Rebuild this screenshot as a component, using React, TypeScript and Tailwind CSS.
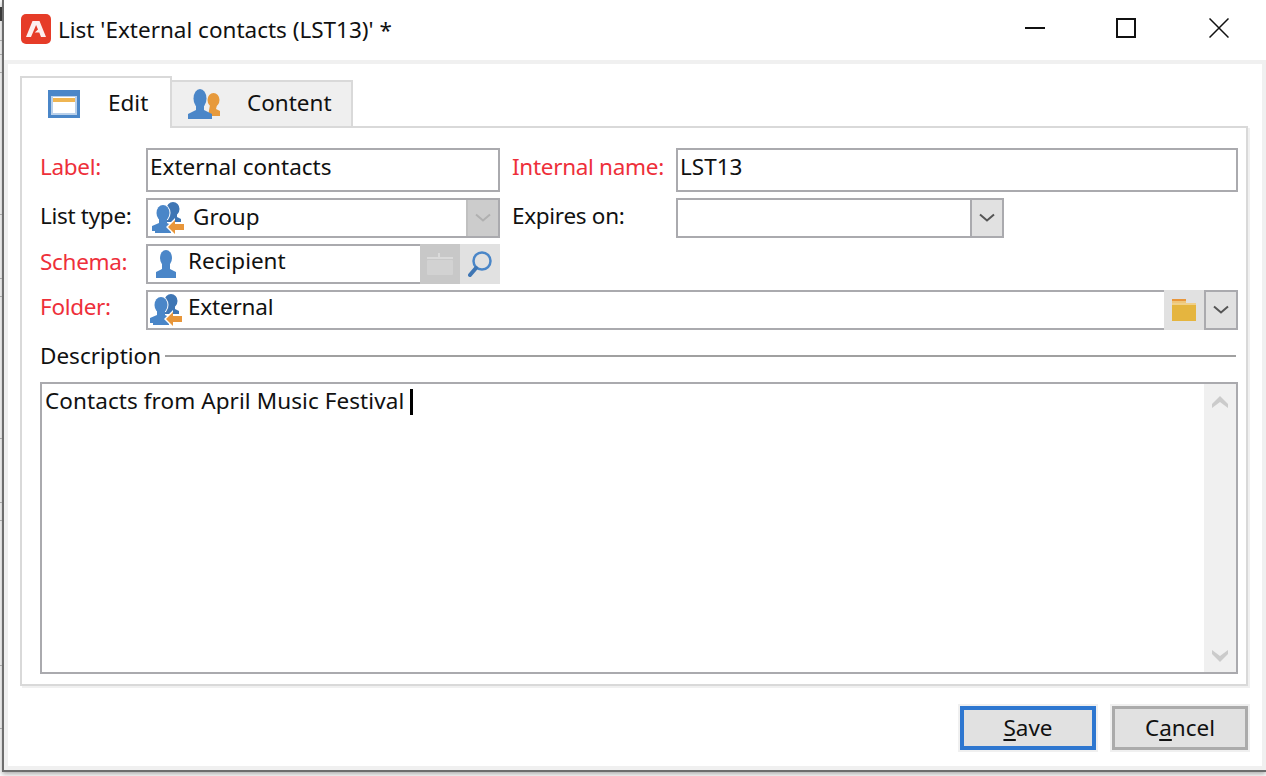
import type { ReactNode } from "react";

// bits of the window behind the dialog that show along the left edge
const backgroundTicks = [40, 54, 72, 214, 278, 296, 438, 502, 520, 665, 728];

const AdobeLogo = () => (
  <svg width="30" height="30" viewBox="0 0 30 30">
    <rect width="30" height="30" rx="5" fill="#e63c28" />
    <path d="M11.5 7h7L25 23h-5l-1.700-4.400h-4.600L17 15.500l-1.900-4.400L10 23H5z" fill="#fff" opacity="0.92" />
  </svg>
);

const EditIcon = () => (
  <svg width="32" height="28" viewBox="0 0 32 28">
    <rect width="32" height="28" fill="#4a86c8" />
    <rect x="3" y="6" width="26" height="19" fill="#b9d0ea" />
    <rect x="5" y="7" width="22" height="16" fill="#fff" />
    <rect x="5" y="8" width="22" height="4" fill="#efb552" />
  </svg>
);

const ContentIcon = () => (
  <svg width="32" height="30" viewBox="0 0 32 30">
    <ellipse cx="25.500" cy="11" rx="6" ry="7" fill="#e79a3c" />
    <path d="M22 16h7l-1 4 4 2v5h-12z" fill="#e79a3c" />
    <ellipse cx="12" cy="9.500" rx="6.500" ry="9.500" fill="#4a86c8" />
    <path d="M8 16h8v5l8 4v5H0v-5l8-4z" fill="#4a86c8" />
  </svg>
);

const GroupIcon = () => (
  <svg width="32" height="32" viewBox="0 0 32 32">
    <ellipse cx="21" cy="7" rx="6.500" ry="7" fill="#3f76b4" />
    <path d="M17 12h8v3l4 2v3H14v-4z" fill="#3f76b4" />
    <ellipse cx="11" cy="11" rx="7.500" ry="9" fill="#fff" />
    <ellipse cx="11" cy="11" rx="6.500" ry="8" fill="#4a86c8" />
    <path d="M7 17h8v4l4 2v8H3v-2H0v-5l7-3z" fill="#4a86c8" />
    <path d="M14 25l9-9v4h9v10h-9v4z" fill="#fff" />
    <path d="M16 25l7-7v4h9v6h-9v4z" fill="#e8963a" />
  </svg>
);

const PersonIcon = () => (
  <svg width="20" height="28" viewBox="0 0 20 28">
    <ellipse cx="10" cy="8" rx="6" ry="8" fill="#4a86c8" />
    <path d="M6 14h8v5l6 3v6H0v-6l6-3z" fill="#4a86c8" />
  </svg>
);

const SearchIcon = () => (
  <svg width="24" height="26" viewBox="0 0 24 26" fill="none">
    <circle cx="14" cy="10" r="8.500" stroke="#4a86c8" strokeWidth="2.500" />
    <path d="M8 17L2 24" stroke="#3f76b4" strokeWidth="4" strokeLinecap="round" />
  </svg>
);

const FolderIcon = () => (
  <svg width="24" height="22" viewBox="0 0 24 22">
    <rect y="0" width="14" height="2" fill="#e8963a" />
    <rect y="2" width="14" height="2" fill="#efc67a" />
    <rect y="4" width="24" height="18" fill="#e5b53f" />
    <rect y="4" width="24" height="2" fill="#f0d08a" />
  </svg>
);

const Chevron = ({ color = "#555555" }: { color?: string }) => (
  <svg width="16" height="10" viewBox="0 0 16 10" fill="none">
    <path d="M1 1.500l7 6 7-6" stroke={color} strokeWidth="2" />
  </svg>
);

const ScrollArrow = ({ down }: { down?: boolean }) => (
  <svg width="16" height="12" viewBox="0 0 16 12" className={down ? "rotate-180" : ""}>
    <path d="M0 8L8 0l8 8v4L8 6l-8 6z" fill="#cbcbcb" />
  </svg>
);

const Label = ({ children, red }: { children: ReactNode; red?: boolean }) => (
  <div className={`w-[106px] shrink-0 tracking-[-0.3px] ${red ? "text-[#ee2f3a]" : "text-[#111111]"}`}>{children}</div>
);

export default function App() {
  return (
    <div className="relative w-[1266px] h-[776px] overflow-hidden bg-white pl-[2px] text-[#111111] text-[22.5px] leading-[30px] font-['Noto_Sans','Open_Sans',sans-serif]">
      <div className="absolute left-0 top-[7px] w-[2px] h-[14px] bg-[#3a3a3a]" />
      {backgroundTicks.map((y) => (
        <div key={y} className="absolute left-0 w-[2px] h-[1px] bg-[#a8a8a8]" style={{ top: y }} />
      ))}

      <div className="h-[772px] flex flex-col bg-white border-l-2 border-b-2 border-[#6d6d6d] shadow-[0_2px_5px_rgba(0,0,0,0.35)]">
        {/* Title bar */}
        <div className="h-[60px] shrink-0 flex items-center pl-[17px]">
          <div className="mt-[-2px]">
            <AdobeLogo />
          </div>
          <div className="ml-[7px] mt-[-1px]">List 'External contacts (LST13)' *</div>
          <div className="ml-auto flex items-center mr-[37px] mt-[-4px]">
            <div className="w-5 h-[2px] bg-[#111111]" />
            <div className="ml-[71px] w-5 h-5 border-2 border-[#111111]" />
            <svg className="ml-[73px]" width="20" height="20" viewBox="0 0 20 20" fill="none">
              <path d="M0.500 0.500l19 19M19.500 0.500l-19 19" stroke="#111111" strokeWidth="1.500" />
            </svg>
          </div>
        </div>

        {/* Client area */}
        <div className="flex-1 flex flex-col border-4 border-[#f0f0f0] px-3 pt-3">
          {/* Tabs */}
          <div className="flex items-end h-[52px] mb-[-2px]">
            <div className="relative z-10 w-[152px] h-[52px] flex items-center bg-white border-2 border-b-0 border-[#d9d9d9] pl-[26px]">
              <div className="pt-[2px]">
                <EditIcon />
              </div>
              <span className="ml-[28px]">Edit</span>
            </div>
            <div className="w-[181px] h-[48px] flex items-center bg-[#efefef] border-2 border-l-0 border-[#d9d9d9] pl-[16px]">
              <ContentIcon />
              <span className="ml-[27px] mt-[-2px]">Content</span>
            </div>
          </div>

          {/* Panel */}
          <div className="h-[560px] w-[1228px] flex flex-col border-2 border-[#d9d9d9] shadow-[2px_2px_0_#f0f0f0] pl-[18px] pr-[7px] pt-5 pb-[10px]">
            <div className="flex h-[44px]">
              <Label red>
                <div className="mt-[4px]">Label:</div>
              </Label>
              <div className="w-[354px] border-2 border-[#aaaaae] pl-[2px] pt-[2px]">External contacts</div>
              <div className="ml-3 w-[164px] mt-[4px] text-[#ee2f3a] tracking-[-0.3px]">Internal name:</div>
              <div className="w-[562px] border-2 border-[#aaaaae] pl-[2px] pt-[2px]">LST13</div>
            </div>

            <div className="flex h-10 mt-[6px]">
              <Label>
                <div className="mt-[3px]">List type:</div>
              </Label>
              <div className="w-[354px] flex border-2 border-[#aaaaae]">
                <div className="flex-1 flex items-center pl-1">
                  <GroupIcon />
                  <span className="ml-[9px] mt-[-2px]">Group</span>
                </div>
                <div className="w-8 flex items-center justify-center bg-[#cccccc] border-l-2 border-[#c0c0c0]">
                  <Chevron color="#b0b0b0" />
                </div>
              </div>
              <div className="ml-3 w-[164px] mt-[3px] tracking-[-0.3px]">Expires on:</div>
              <div className="w-[328px] flex justify-end border-2 border-[#aaaaae]">
                <div className="w-8 flex items-center justify-center bg-[#e1e1e1] border-l-2 border-[#aaaaae]">
                  <Chevron />
                </div>
              </div>
            </div>

            <div className="flex h-10 mt-[6px]">
              <Label red>
                <div className="mt-[3px]">Schema:</div>
              </Label>
              <div className="w-[274px] flex items-center border-2 border-r-0 border-[#aaaaae] pl-2">
                <PersonIcon />
                <span className="ml-3 mt-[-6px]">Recipient</span>
              </div>
              <div className="w-10 flex items-center justify-center bg-[#c8c8c8]">
                <svg width="26" height="22" viewBox="0 0 26 22">
                  <path d="M0 4h11V0h2v4h13v2H0z" fill="#dadada" />
                  <rect y="7" width="26" height="15" rx="1" fill="#d2d2d2" />
                </svg>
              </div>
              <div className="w-10 flex items-center justify-center bg-[#e1e1e1]">
                <SearchIcon />
              </div>
            </div>

            <div className="flex h-10 mt-[6px]">
              <Label red>
                <div className="mt-[2px]">Folder:</div>
              </Label>
              <div className="w-[1018px] flex items-center border-2 border-r-0 border-[#aaaaae] pl-[2px]">
                <GroupIcon />
                <span className="ml-[6px] mt-[-6px] tracking-[-0.2px]">External</span>
              </div>
              <div className="w-10 flex items-center justify-center bg-[#e1e1e1]">
                <FolderIcon />
              </div>
              <div className="w-[34px] flex items-center justify-center bg-[#e1e1e1] border-2 border-[#aaaaae]">
                <Chevron />
              </div>
            </div>

            {/* Description */}
            <div className="flex items-center h-[30px] mt-[11px] w-[1196px]">
              <span>Description</span>
              <div className="flex-1 h-[2px] ml-[4px] bg-[#a0a0a0]" />
            </div>
            <div className="flex-1 flex mt-[11px] w-[1198px] border-2 border-[#aaaaae]">
              <div className="flex-1 pl-[3px] pt-[2px] flex items-start">
                <span className="tracking-[0.08px]">Contacts from April Music Festival</span>
                <span className="ml-[6px] mt-[3px] w-[3px] h-[26px] bg-black" />
              </div>
              <div className="w-8 flex flex-col items-center justify-between bg-[#f0f0f0] pt-[12px] pb-[10px]">
                <ScrollArrow />
                <ScrollArrow down />
              </div>
            </div>
          </div>

          {/* Buttons */}
          <div className="flex justify-end gap-4 mt-5 mr-[-2px] w-[1228px]">
            <button className="w-[136px] h-[44px] bg-[#e1e1e1] border-4 border-[#2e77d0] outline-2 outline-[#f0f0f0]">
              <span className="underline decoration-2 underline-offset-[3px]">S</span>ave
            </button>
            <button className="w-[136px] h-[44px] bg-[#e1e1e1] border-[3px] border-[#ababab] outline-2 outline-[#f0f0f0]">
              C<span className="underline decoration-2 underline-offset-[3px]">a</span>ncel
            </button>
          </div>
        </div>
      </div>
    </div>
  );
}
